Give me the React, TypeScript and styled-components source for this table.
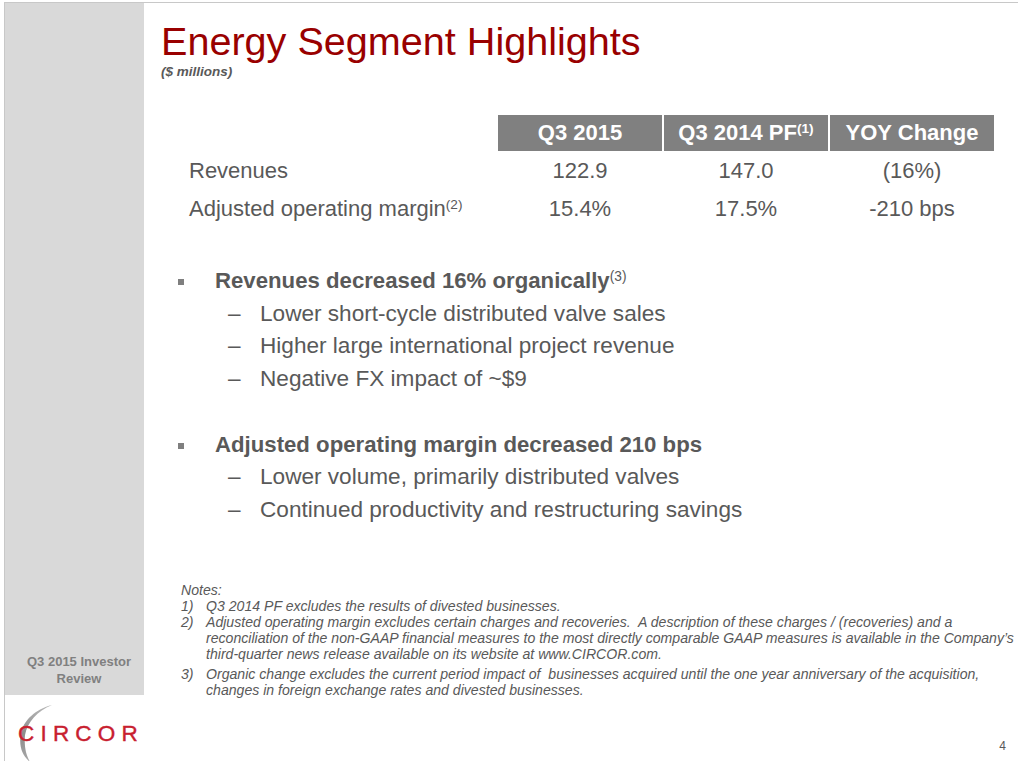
import React from 'react';
import styled, { createGlobalStyle } from 'styled-components';

const GlobalStyle = createGlobalStyle`
  html, body {
    margin: 0;
    padding: 0;
    background: #ffffff;
  }
  body {
    font-family: 'Liberation Sans', Arial, sans-serif;
  }
`;

const Slide = styled.div`
  width: 1018px;
  height: 761px;
  box-sizing: border-box;
  padding: 2px 0 0 4px;
  display: flex;
  overflow: hidden;
  background: #ffffff;
`;

const Frame = styled.div`
  flex: 1;
  display: flex;
  min-width: 0;
  border-top: 1px solid #c8c8c8;
  border-left: 1px solid #c8c8c8;
`;

const Aside = styled.aside`
  width: 139px;
  flex: none;
  display: flex;
  flex-direction: column;
`;

const GrayPanel = styled.div`
  height: 692px;
  box-sizing: border-box;
  background: #d9d9d9;
  display: flex;
  flex-direction: column;
  justify-content: flex-end;
  align-items: center;
  padding: 0 0 8px 9px;
  color: #808080;
  font-size: 13px;
  font-weight: bold;
  line-height: 16.5px;
  text-align: center;
`;

const LogoArea = styled.div`
  flex: 1;
  position: relative;
  padding: 28px 0 0 13px;
`;

const Swoosh = styled.svg`
  position: absolute;
  left: 0;
  top: 0;
`;

const LogoText = styled.div`
  position: relative;
  font-family: 'Liberation Sans', Arial, sans-serif;
  font-size: 22.5px;
  line-height: 22px;
  letter-spacing: 6.2px;
  color: #c8202f;
  -webkit-text-stroke: 0.4px #c8202f;
`;

const Main = styled.main`
  flex: 1;
  min-width: 0;
  display: flex;
  flex-direction: column;
  padding: 18px 0 0 17px;
  color: #595959;
`;

const Title = styled.h1`
  margin: 0;
  font-size: 39.6px;
  line-height: 40px;
  font-weight: normal;
  color: #990000;
`;

const Subtitle = styled.div`
  margin-top: 3px;
  font-size: 13.5px;
  line-height: 16px;
  font-weight: bold;
  font-style: italic;
  color: #595959;
`;

const Table = styled.div`
  margin-top: 35px;
  display: grid;
  grid-template-columns: 335px repeat(3, 164px);
  grid-template-rows: 36px 36px 36px;
  column-gap: 2px;
  row-gap: 2px;
  font-size: 22px;
`;

const HeadCell = styled.div<{ $empty?: boolean }>`
  background: ${({ $empty }) => ($empty ? 'transparent' : '#808080')};
  color: #ffffff;
  font-weight: bold;
  line-height: 36px;
  text-align: center;
  white-space: nowrap;
`;

const Cell = styled.div<{ $label?: boolean }>`
  line-height: 36px;
  text-align: ${({ $label }) => ($label ? 'left' : 'center')};
  padding-left: ${({ $label }) => ($label ? '28px' : '0')};
  white-space: nowrap;
  color: #595959;
`;

const Sup = styled.sup<{ $light?: boolean }>`
  font-size: 0.62em;
  line-height: 0;
  vertical-align: 0.5em;
  font-weight: ${({ $light }) => ($light ? 'normal' : 'inherit')};
`;

const Bullets = styled.div`
  margin-top: 38px;
  line-height: 32.7px;
`;

const Group = styled.div<{ $gap?: boolean }>`
  margin-top: ${({ $gap }) => ($gap ? '32.7px' : '0')};
`;

const BulletRow = styled.div`
  display: flex;
  align-items: baseline;
  padding-left: 17px;
  font-size: 22.2px;
  font-weight: bold;
  white-space: nowrap;
`;

const Square = styled.span`
  display: inline-block;
  flex: none;
  width: 6px;
  height: 6px;
  background: #7f7f7f;
  margin-right: 31px;
  position: relative;
  top: -3px;
`;

const SubRow = styled.div`
  display: flex;
  align-items: baseline;
  padding-left: 67px;
  font-size: 22.6px;
  white-space: nowrap;
`;

const Dash = styled.span`
  width: 32px;
  flex: none;
`;

const Notes = styled.div`
  margin-top: 55px;
  padding-left: 20px;
  font-size: 14.1px;
  line-height: 16px;
  font-style: italic;
  color: #595959;
`;

const NoteRow = styled.div<{ $space?: boolean }>`
  display: grid;
  grid-template-columns: 25px auto;
  margin-top: ${({ $space }) => ($space ? '4px' : '0')};
  white-space: pre;
`;

const Footer = styled.div`
  margin-top: auto;
  padding: 0 12px 8px 0;
  text-align: right;
  font-size: 12px;
  line-height: 14px;
  color: #595959;
`;

const Logo = () => (
  <LogoArea>
    <Swoosh width="60" height="70" viewBox="0 0 60 70">
      <defs>
        <linearGradient id="sw" x1="0" y1="0" x2="0" y2="1">
          <stop offset="0" stopColor="#b8b8b8" />
          <stop offset="0.5" stopColor="#8c8c8c" />
          <stop offset="1" stopColor="#a8a8a8" />
        </linearGradient>
      </defs>
      <path
        d="M47 10 C31 14, 18 25, 15.5 40 C14 53, 18 61, 25 67 C21 60, 19 52, 20 40 C22.5 27, 32 16, 47 10 Z"
        fill="url(#sw)"
      />
    </Swoosh>
    <LogoText>CIRCOR</LogoText>
  </LogoArea>
);

const rows = [
  { label: 'Revenues', sup: '', values: ['122.9', '147.0', '(16%)'] },
  {
    label: 'Adjusted operating margin',
    sup: '(2)',
    values: ['15.4%', '17.5%', '-210 bps'],
  },
];

const groups = [
  {
    head: 'Revenues decreased 16% organically',
    sup: '(3)',
    items: [
      'Lower short-cycle distributed valve sales',
      'Higher large international project revenue',
      'Negative FX impact of ~$9',
    ],
  },
  {
    head: 'Adjusted operating margin decreased 210 bps',
    sup: '',
    items: [
      'Lower volume, primarily distributed valves',
      'Continued productivity and restructuring savings',
    ],
  },
];

const notes = [
  { n: '1)', lines: ['Q3 2014 PF excludes the results of divested businesses.'] },
  {
    n: '2)',
    lines: [
      'Adjusted operating margin excludes certain charges and recoveries.  A description of these charges / (recoveries) and a',
      'reconciliation of the non-GAAP financial measures to the most directly comparable GAAP measures is available in the Company\u2019s',
      'third-quarter news release available on its website at www.CIRCOR.com.',
    ],
  },
  {
    n: '3)',
    lines: [
      'Organic change excludes the current period impact of  businesses acquired until the one year anniversary of the acquisition,',
      'changes in foreign exchange rates and divested businesses.',
    ],
  },
];

export default function App() {
  return (
    <>
      <GlobalStyle />
      <Slide>
        <Frame>
          <Aside>
            <GrayPanel>
              <div>Q3 2015 Investor</div>
              <div>Review</div>
            </GrayPanel>
            <Logo />
          </Aside>
          <Main>
            <Title>Energy Segment Highlights</Title>
            <Subtitle>($ millions)</Subtitle>
            <Table>
              <HeadCell $empty />
              <HeadCell>Q3 2015</HeadCell>
              <HeadCell>
                Q3 2014 PF<Sup>(1)</Sup>
              </HeadCell>
              <HeadCell>YOY Change</HeadCell>
              {rows.map((r) => (
                <React.Fragment key={r.label}>
                  <Cell $label>
                    {r.label}
                    {r.sup && <Sup>{r.sup}</Sup>}
                  </Cell>
                  {r.values.map((v, i) => (
                    <Cell key={i}>{v}</Cell>
                  ))}
                </React.Fragment>
              ))}
            </Table>
            <Bullets>
              {groups.map((g, gi) => (
                <Group key={g.head} $gap={gi > 0}>
                  <BulletRow>
                    <Square />
                    <span>
                      {g.head}
                      {g.sup && <Sup $light>{g.sup}</Sup>}
                    </span>
                  </BulletRow>
                  {g.items.map((it) => (
                    <SubRow key={it}>
                      <Dash>–</Dash>
                      <span>{it}</span>
                    </SubRow>
                  ))}
                </Group>
              ))}
            </Bullets>
            <Notes>
              <div>Notes:</div>
              {notes.map((n) => (
                <NoteRow key={n.n} $space={n.n === '3)'}>
                  <span>{n.n}</span>
                  <div>
                    {n.lines.map((l) => (
                      <div key={l}>{l}</div>
                    ))}
                  </div>
                </NoteRow>
              ))}
            </Notes>
            <Footer>4</Footer>
          </Main>
        </Frame>
      </Slide>
    </>
  );
}
